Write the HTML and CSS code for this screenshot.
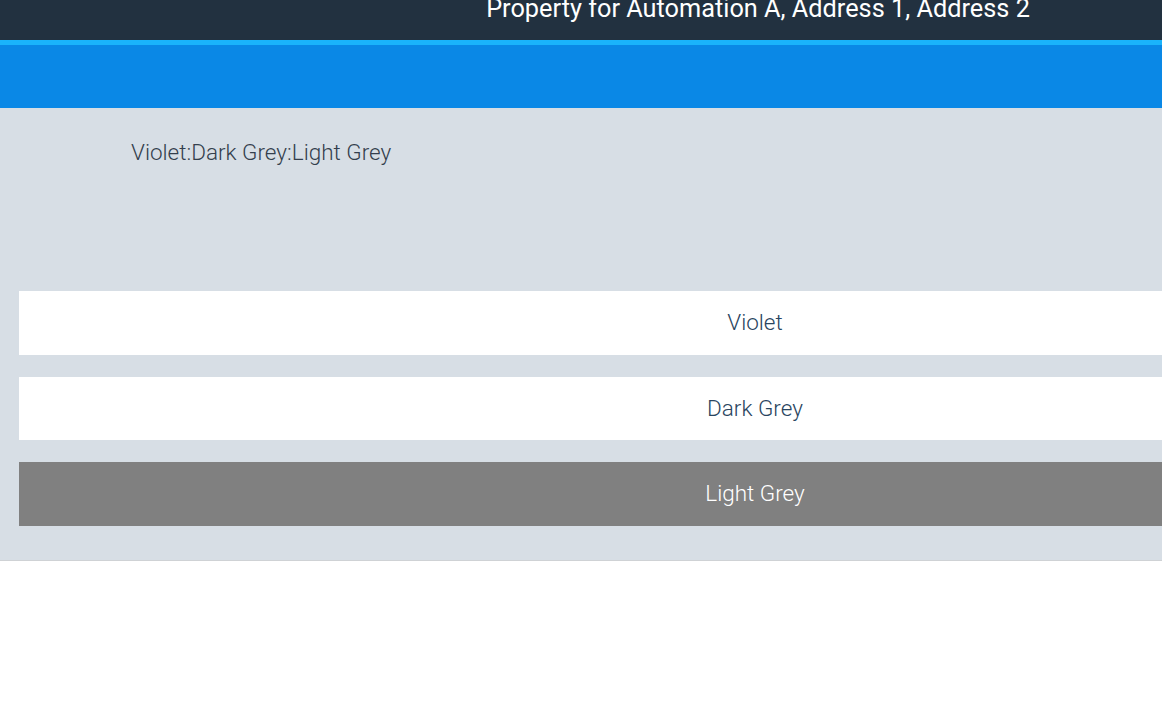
FILE: index.html
```html
<!DOCTYPE html>
<html>
<head>
<meta charset="utf-8">
<link rel="stylesheet" href="styles.css">
</head>
<body>
<div class="page">
  <header class="topbar">
    <div class="title">Property for Automation A, Address 1, Address 2</div>
  </header>
  <div class="stripe"></div>
  <div class="bluebar"></div>
  <section class="panel">
    <div class="summary">Violet:Dark Grey:Light Grey</div>
    <div class="options">
      <div class="option">Violet</div>
      <div class="option">Dark Grey</div>
      <div class="option selected">Light Grey</div>
    </div>
  </section>
</div>
</body>
</html>
```

FILE: styles.css
```css
html, body {
  margin: 0;
  padding: 0;
  overflow: hidden;
  background: #ffffff;
}
.page {
  width: 1510px;
  font-family: Roboto, "Liberation Sans", sans-serif;
}
.topbar {
  height: 40px;
  background: #223140;
  display: flex;
  justify-content: center;
  overflow: hidden;
}
.title {
  color: #ffffff;
  font-size: 25.3px;
  line-height: 30px;
  margin-top: -6px;
  padding-left: 6px;
}
.stripe {
  height: 5px;
  background: #1ab3fb;
}
.bluebar {
  height: 63px;
  background: #0a88e6;
}
.panel {
  background: #d7dee5;
  border-bottom: 1px solid #cfd2d5;
  padding: 30px 19px 0;
  height: 422px;
  box-sizing: content-box;
}
.summary {
  padding-left: 112px;
  font-size: 22.5px;
  font-weight: 300;
  color: #343f4d;
  line-height: 28px;
}
.options {
  margin-top: 125px;
  display: flex;
  flex-direction: column;
  gap: 22px;
}
.option {
  height: 63.5px;
  background: #ffffff;
  display: flex;
  align-items: center;
  justify-content: center;
  font-size: 22.5px;
  font-weight: 300;
  color: #2a4560;
  padding-bottom: 1px;
  box-sizing: border-box;
}
.option.selected {
  background: #808080;
  color: #ffffff;
}
```
